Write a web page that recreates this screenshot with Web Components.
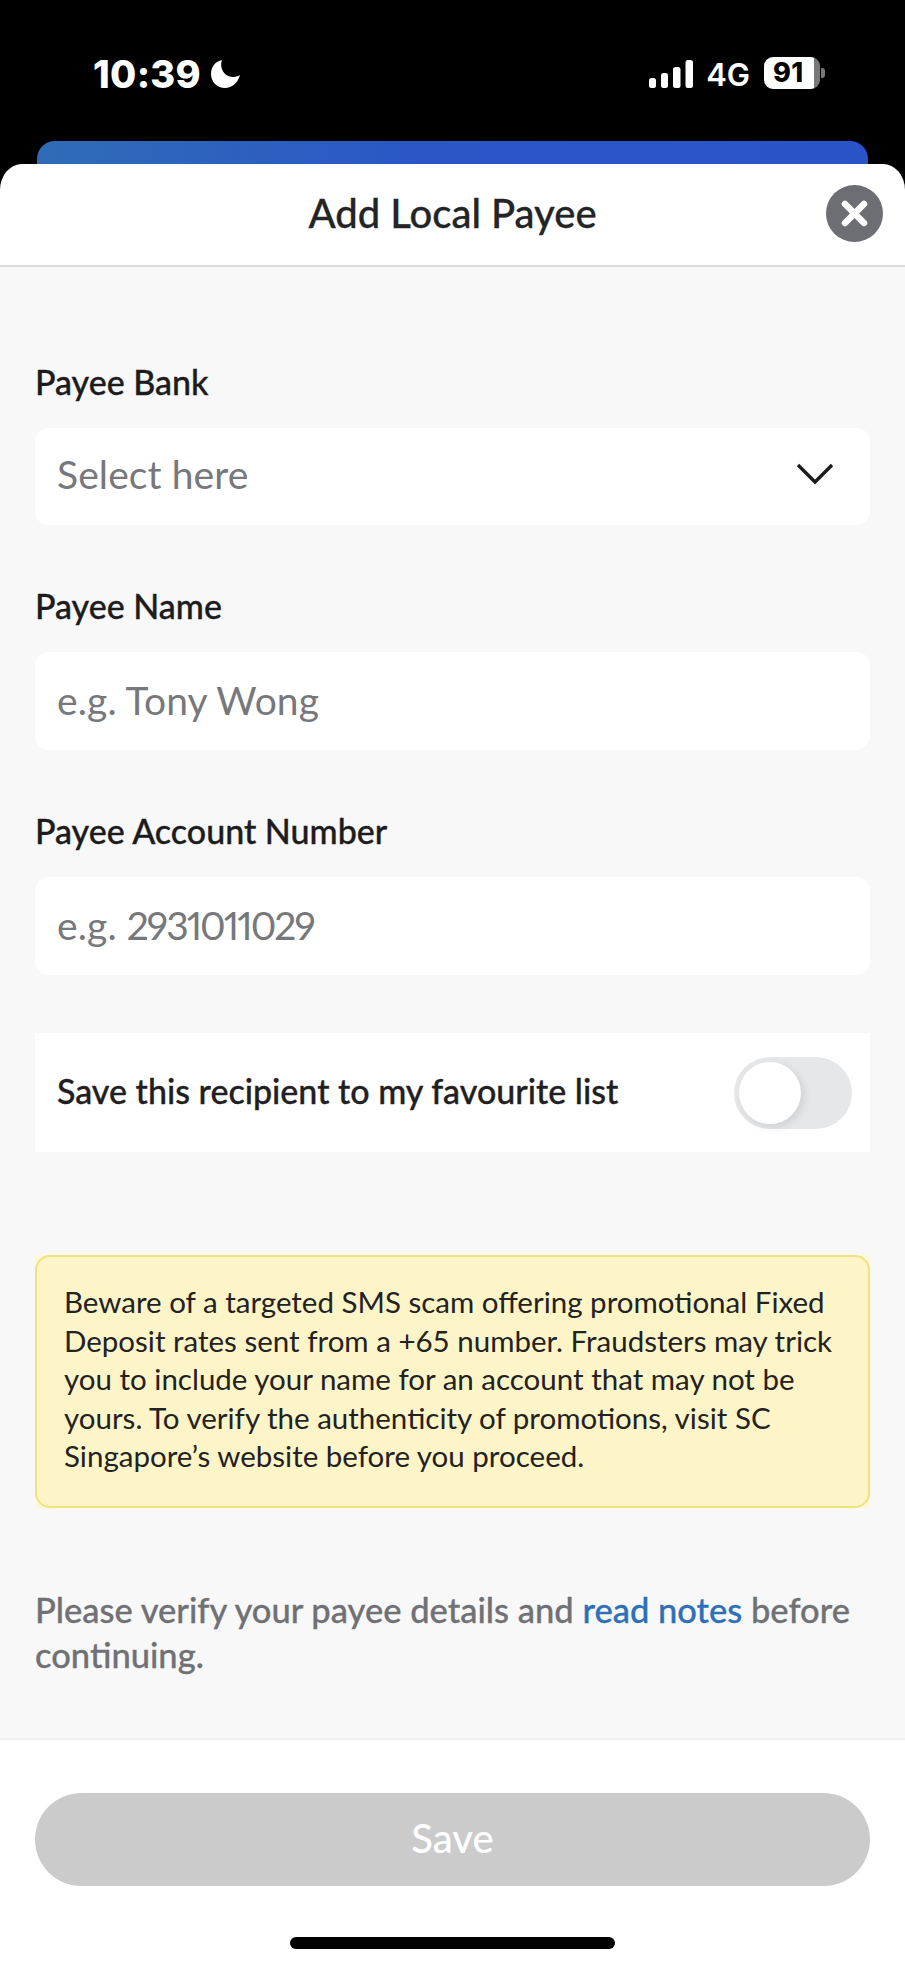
<!DOCTYPE html>
<html lang="en"><head><meta charset="utf-8"><title>Add Local Payee</title>
<style>html,body{margin:0;padding:0;background:#000}body{font-family:Lato,"Open Sans",sans-serif;width:905px}</style>
</head><body>
<app-screen>
  <status-bar slot="top" time="10:39" network="4G" battery="91"></status-bar>
  <sheet-header slot="top">Add Local Payee</sheet-header>
  <form-field label="Payee Bank" placeholder="Select here" chevron></form-field>
  <form-field label="Payee Name" placeholder="e.g. Tony Wong" tall></form-field>
  <form-field label="Payee Account Number" placeholder="e.g. " digits="2931011029" tall></form-field>
  <toggle-row>Save this recipient to my favourite list</toggle-row>
  <notice-box>Beware of a targeted SMS scam offering promotional Fixed<br>Deposit rates sent from a +65 number. Fraudsters may trick<br>you to include your name for an account that may not be<br>yours. To verify the authenticity of promotions, visit SC<br>Singapore’s website before you proceed.</notice-box>
  <verify-note>Please verify your payee details and <a>read notes</a> before<br>continuing.</verify-note>
  <sheet-footer slot="bottom">Save</sheet-footer>
</app-screen>
<script>
function def(name, html){
  customElements.define(name, class extends HTMLElement{
    constructor(){super();this.attachShadow({mode:'open'});}
    connectedCallback(){this.shadowRoot.innerHTML = typeof html==='function'?html(this):html;}
  });
}
def('app-screen',`<style>
:host{display:flex;flex-direction:column;width:905px;height:1967px;background:#000;overflow:hidden}
.body{flex:1;background:#f8f8f8;display:flex;flex-direction:column;padding:95px 35px 0;box-sizing:border-box;min-height:0}
</style><slot name="top"></slot><div class="body"><slot></slot></div><slot name="bottom"></slot>`);
def('status-bar',h=>`<style>
:host{display:block;height:164px;background:#000;color:#fff;box-sizing:border-box;position:relative}
.row{display:flex;align-items:flex-start;height:141px;box-sizing:border-box;padding:57px 80px 0 93px;font-family:Inter,"Liberation Sans",sans-serif}
.time{font-size:38px;font-weight:800;line-height:34px;letter-spacing:.3px}
.moon{margin:3px 0 0 10px}
.right{margin-left:auto;display:flex;align-items:flex-start}
.net{font-size:31px;font-weight:600;line-height:30px;margin:3px 14px 0 13px;letter-spacing:0}
.bat{display:flex;align-items:center;height:32px}
.cell{width:56px;height:32px;border-radius:9px;background:linear-gradient(90deg,#fff 0 89%,#77787a 89%);color:#000;font-size:27px;font-weight:800;line-height:32px;text-align:left;padding-left:9px;box-sizing:border-box;letter-spacing:.5px}
.nub{width:4px;height:10px;margin-left:1px;background:#77787a;border-radius:0 3px 3px 0}
.peek{height:23px;margin:0 37px;border-radius:18px 18px 0 0;background:linear-gradient(90deg,#2f6cb6 0,#2c56c6 45%,#2b53c8 100%)}
</style><div class="row"><span class="time">${h.getAttribute('time')}</span>
<svg class="moon" width="29" height="28" viewBox="0 0 29 28"><path fill="#fff" d="M11 0C4.5 1.2 0 7 0 14c0 8 6.3 14 14 14 6.8 0 12.8-5 15-13-2.5 1.6-5 2-7.2 2C16.5 17 11.8 13 10.6 8 10 5 10 2.5 11 0z"/></svg>
<div class="right">
<svg width="44" height="30" viewBox="0 0 44 30" style="margin-top:2px"><g fill="#fff"><rect x="0" y="19" width="7" height="10" rx="2.5"/><rect x="12" y="14" width="7" height="15" rx="2.5"/><rect x="24" y="8" width="7.5" height="21" rx="2.5"/><rect x="36.5" y="1" width="7.5" height="28" rx="2.5"/></g></svg>
<span class="net">${h.getAttribute('network')}</span>
<div class="bat"><div class="cell">${h.getAttribute('battery')}</div><div class="nub"></div></div>
</div></div><div class="peek"></div>`);
def('sheet-header',`<style>
:host{display:flex;align-items:center;justify-content:center;position:relative;height:103px;box-sizing:border-box;padding-bottom:4px;background:#fff;border-bottom:2px solid #dcdcdc;border-radius:22px 22px 0 0/26px 26px 0 0;font-size:40px;font-weight:500;color:#232426;-webkit-text-stroke:.3px #232426}
.x{position:absolute;right:22px;top:21px;width:57px;height:57px}
</style><slot></slot>
<svg class="x" viewBox="0 0 57 57" aria-hidden="true"><circle cx="28.5" cy="28.5" r="28.5" fill="#6c6e73"/><path d="M19 19l19 19M38 19L19 38" stroke="#fff" stroke-width="6.5" stroke-linecap="round"/></svg>`);
def('form-field',h=>`<style>
:host{display:block;margin-bottom:61px}
.l{font-size:34px;font-weight:500;color:#1c1c1e;height:40px;line-height:40px;margin-bottom:26px;-webkit-text-stroke:.35px #1c1c1e}
.b{height:${h.hasAttribute('tall')?98:97}px;background:#fff;border-radius:14px;display:flex;align-items:center;padding:0 36px ${h.hasAttribute('chevron')?5:2}px 22px;font-size:39px;color:#77787c;box-sizing:border-box;letter-spacing:.1px}
.t{white-space:pre}
.d{font-variant-numeric:proportional-nums;letter-spacing:-2px}
svg{margin-left:auto}
</style><div class="l">${h.getAttribute('label')}</div><div class="b"><span class="t">${h.getAttribute('placeholder')}${h.hasAttribute('digits')?`<span class="d">${h.getAttribute('digits')}</span>`:''}</span>${h.hasAttribute('chevron')?'<svg width="38" height="24" viewBox="0 0 38 24"><path d="M2 3l17 17L36 3" fill="none" stroke="#1c1c1e" stroke-width="3.4"/></svg>':''}</div>`);
def('toggle-row',`<style>
:host{display:flex;align-items:center;height:119px;margin-top:-3px;background:#fff;padding:0 18px 0 22px;font-size:34px;font-weight:500;color:#1f2022;-webkit-text-stroke:.35px #1f2022}
span{margin-bottom:4px}
.t{margin-left:auto;width:118px;height:72px;border-radius:36px;background:#e6e7e9;display:flex;align-items:center;padding-left:5px;box-sizing:border-box}
.k{width:62px;height:62px;border-radius:50%;background:#fff;box-shadow:3px 3px 8px rgba(0,0,0,.1)}
</style><span><slot></slot></span><div class="t"><div class="k"></div></div>`);
def('notice-box',`<style>
:host{display:block;height:253px;margin-top:103px;background:#fdf8dc}
.n{height:100%;box-sizing:border-box;background:#fdf5c8;border:2px solid #f2e27c;border-radius:15px;padding:26px 27px;font-size:29.5px;line-height:38.6px;color:#222}
</style><div class="n"><slot></slot></div>`);
def('verify-note',`<style>
:host{display:block;margin-top:79px;font-size:34.5px;line-height:45px;font-weight:500;color:#6f7175;-webkit-text-stroke:.3px #6f7175}
::slotted(a){color:#2d70b8;-webkit-text-stroke:.3px #2d70b8}
</style><slot></slot>`);
def('sheet-footer',`<style>
:host{display:block;height:229px;box-sizing:border-box;background:#fff;border-top:2px solid #efefef;padding:53px 35px 0}
.btn{height:93px;box-sizing:border-box;padding-bottom:3px;border-radius:46.5px;background:#cccbcc;color:#fff;font-size:40px;font-weight:500;display:flex;align-items:center;justify-content:center}
.home{width:325px;height:12px;border-radius:6px;background:#000;margin:51px auto 0}
</style><div class="btn"><slot></slot></div><div class="home"></div>`);
</script>
</body></html>
